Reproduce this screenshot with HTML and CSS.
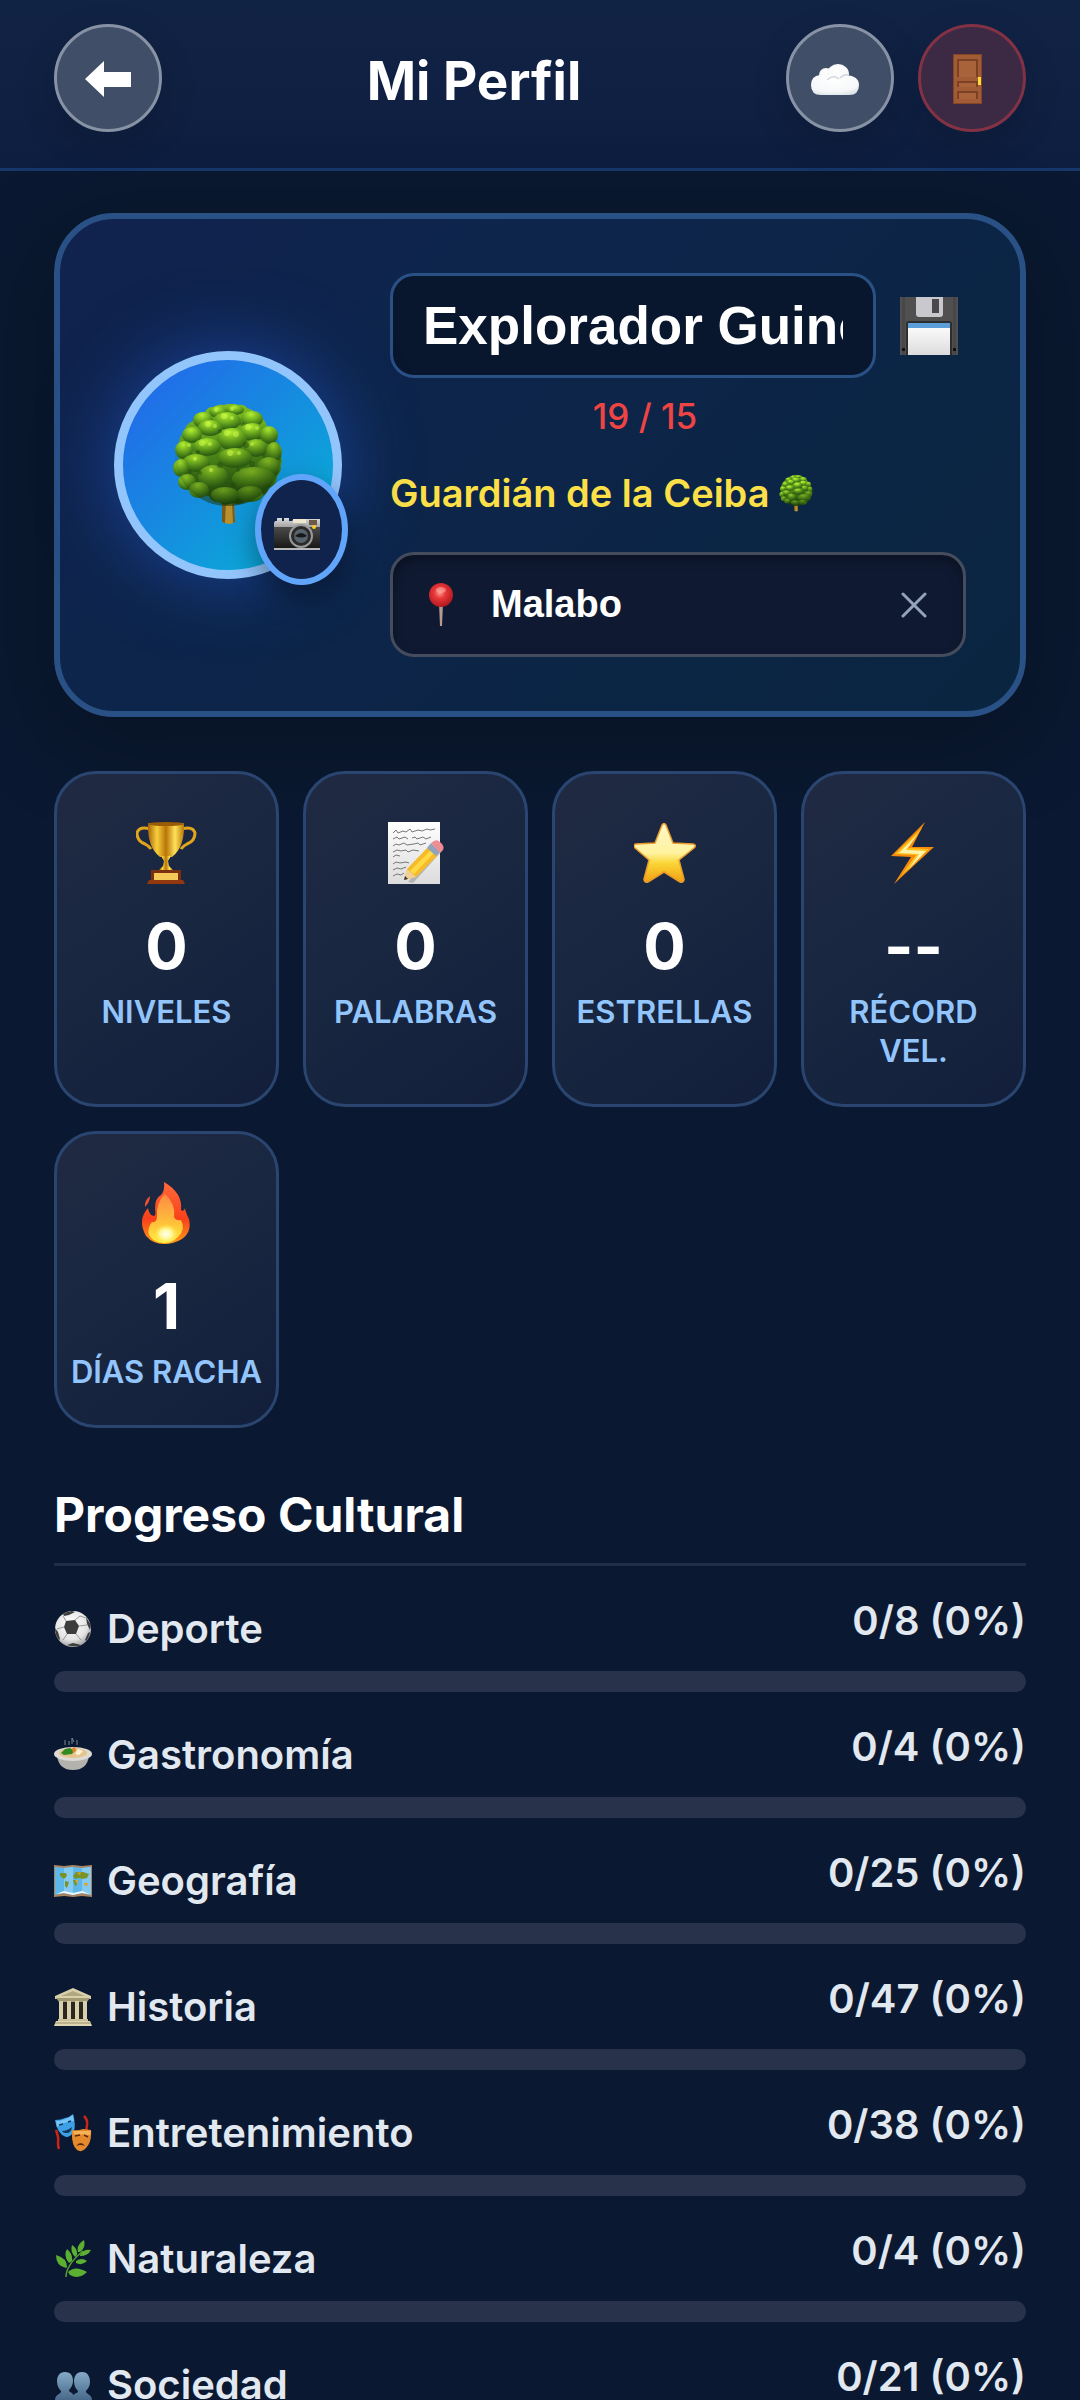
FILE: index.html
```html
<!DOCTYPE html>
<html lang="es">
<head>
    <meta charset="UTF-8">
    <meta name="viewport" content="width=device-width, initial-scale=1.0">
    <title>Mi Perfil</title>
    <link rel="stylesheet" href="styles.css">
</head>
<body>
    <!-- Dibujos compartidos -->
    <svg class="defs" width="0" height="0" aria-hidden="true">
        <defs>
            <radialGradient id="leaf" cx="45%" cy="20%" r="75%">
                <stop offset="0" stop-color="#b4f02f"/>
                <stop offset="0.5" stop-color="#6fae20"/>
                <stop offset="1" stop-color="#2f6312"/>
            </radialGradient>
            <linearGradient id="crown" x1="0" y1="0" x2="0" y2="1">
                <stop offset="0" stop-color="#7dbb22"/>
                <stop offset="0.6" stop-color="#4c8a1a"/>
                <stop offset="1" stop-color="#1f430c"/>
            </linearGradient>
            <linearGradient id="shade" x1="0.3" y1="0" x2="0.6" y2="1">
                <stop offset="0.3" stop-color="#1f430c" stop-opacity="0"/>
                <stop offset="1" stop-color="#1a3a0a" stop-opacity="0.65"/>
            </linearGradient>
            <linearGradient id="gold" x1="0" x2="1" y1="0" y2="0">
                <stop offset="0" stop-color="#a86405"/>
                <stop offset="0.25" stop-color="#f8cf3c"/>
                <stop offset="0.5" stop-color="#b87406"/>
                <stop offset="0.75" stop-color="#ffe15a"/>
                <stop offset="1" stop-color="#b97808"/>
            </linearGradient>
            <linearGradient id="starFill" x1="0" x2="0" y1="0" y2="1">
                <stop offset="0" stop-color="#fff6c8"/>
                <stop offset="0.5" stop-color="#fff3a0"/>
                <stop offset="0.68" stop-color="#fbd535"/>
                <stop offset="1" stop-color="#f0a012"/>
            </linearGradient>
            <linearGradient id="flame" x1="0" x2="0" y1="0" y2="1">
                <stop offset="0" stop-color="#ff6a3c"/>
                <stop offset="0.6" stop-color="#f8401a"/>
                <stop offset="1" stop-color="#ff9b1c"/>
            </linearGradient>
            <linearGradient id="flameIn" x1="0" x2="0" y1="0" y2="1">
                <stop offset="0" stop-color="#ff8a45"/>
                <stop offset="0.6" stop-color="#ffc13a"/>
                <stop offset="1" stop-color="#ffee3a"/>
            </linearGradient>
            <radialGradient id="glow">
                <stop offset="0" stop-color="#fffff0"/>
                <stop offset="0.5" stop-color="#fff79a"/>
                <stop offset="1" stop-color="#ffe84a" stop-opacity="0"/>
            </radialGradient>
            <radialGradient id="puff" cx="45%" cy="30%" r="75%">
                <stop offset="0" stop-color="#ffffff"/>
                <stop offset="0.75" stop-color="#f6f7f9"/>
                <stop offset="1" stop-color="#dde2e8"/>
            </radialGradient>
            <radialGradient id="pinHead" cx="45%" cy="40%" r="60%">
                <stop offset="0" stop-color="#ff9a90"/>
                <stop offset="0.4" stop-color="#e8383a"/>
                <stop offset="1" stop-color="#b0181f"/>
            </radialGradient>
            <linearGradient id="paper" x1="0" x2="0" y1="0" y2="1">
                <stop offset="0" stop-color="#ffffff"/>
                <stop offset="1" stop-color="#dcdcdc"/>
            </linearGradient>
            <linearGradient id="steel" x1="0" x2="0" y1="0" y2="1">
                <stop offset="0" stop-color="#dcdcdc"/>
                <stop offset="0.28" stop-color="#a5a5a5"/>
                <stop offset="0.3" stop-color="#4a4a4a"/>
                <stop offset="1" stop-color="#161616"/>
            </linearGradient>
            <linearGradient id="bust" x1="0" x2="0" y1="0" y2="1">
                <stop offset="0" stop-color="#86a9c8"/>
                <stop offset="1" stop-color="#3f6080"/>
            </linearGradient>
            <radialGradient id="ball" cx="45%" cy="35%" r="65%">
                <stop offset="0" stop-color="#ffffff"/>
                <stop offset="0.7" stop-color="#e4e4e4"/>
                <stop offset="1" stop-color="#a4a4a4"/>
            </radialGradient>
        </defs>
        <symbol id="tree" viewBox="0 0 112 122">
            <path d="M50 98h12l1 20q-6 4-12 0z" fill="#b8922f"/>
            <path d="M50 98h4l-1 21-3-1zM60 98h2l1 20-2 1z" fill="#7c5a1a"/>
            <path d="M40 4q6-5 12-3 8-3 14 0 6-1 9 3 8 2 11 8 8 3 9 11 7 5 6 13 7 5 5 13 6 5 3 12 0 8-4 11 0 9-8 12-2 8-10 9-5 7-13 4-6 5-13 2-8 4-14-1-8 0-10-6-8 0-10-7-9-1-10-9-7-3-6-11-6-4-4-11-5-6 0-12-1-9 5-13 1-9 9-12 3-8 12-9 3-5 7-5z" fill="url(#crown)"/>
            <g fill="url(#leaf)">
                <ellipse cx="46" cy="8" rx="9" ry="6"/><ellipse cx="63" cy="6" rx="9" ry="5"/>
                <ellipse cx="31" cy="16" rx="10" ry="8"/><ellipse cx="80" cy="15" rx="11" ry="8"/>
                <ellipse cx="55" cy="17" rx="14" ry="9"/><ellipse cx="38" cy="24" rx="12" ry="8"/>
                <ellipse cx="20" cy="31" rx="10" ry="8"/><ellipse cx="80" cy="28" rx="13" ry="9"/>
                <ellipse cx="97" cy="31" rx="9" ry="9"/><ellipse cx="12" cy="46" rx="9" ry="9"/>
                <ellipse cx="60" cy="35" rx="15" ry="11"/><ellipse cx="35" cy="43" rx="14" ry="9"/>
                <ellipse cx="84" cy="44" rx="12" ry="9"/><ellipse cx="102" cy="48" rx="8" ry="10"/>
                <ellipse cx="24" cy="59" rx="14" ry="9"/><ellipse cx="63" cy="54" rx="17" ry="10"/>
                <ellipse cx="97" cy="63" rx="12" ry="10"/><ellipse cx="9" cy="64" rx="8" ry="9"/>
                <ellipse cx="15" cy="78" rx="9" ry="8"/><ellipse cx="41" cy="73" rx="15" ry="12"/>
                <ellipse cx="82" cy="75" rx="22" ry="12"/><ellipse cx="27" cy="86" rx="10" ry="8"/>
                <ellipse cx="53" cy="91" rx="14" ry="8"/><ellipse cx="78" cy="90" rx="13" ry="8"/>
            </g>
            <ellipse cx="56" cy="52" rx="53" ry="50" fill="url(#shade)"/>
            <g fill="#d4ff50" opacity="0.5">
                <circle cx="44" cy="6" r="2"/><circle cx="60" cy="5" r="2"/><circle cx="52" cy="12" r="3"/><circle cx="60" cy="14" r="2"/>
                <circle cx="36" cy="20" r="3"/><circle cx="43" cy="22" r="2"/><circle cx="76" cy="23" r="3"/><circle cx="85" cy="24" r="2"/>
                <circle cx="55" cy="29" r="3"/><circle cx="64" cy="30" r="3"/><circle cx="30" cy="39" r="3"/><circle cx="38" cy="40" r="2"/>
                <circle cx="58" cy="49" r="3"/><circle cx="67" cy="49" r="2"/><circle cx="17" cy="41" r="2"/><circle cx="23" cy="55" r="2"/>
                <circle cx="80" cy="40" r="2"/><circle cx="39" cy="66" r="2"/>
            </g>
            <g fill="#244d0e" opacity="0.5">
                <circle cx="48" cy="27" r="2"/><circle cx="70" cy="20" r="2"/><circle cx="26" cy="48" r="2"/><circle cx="74" cy="41" r="3"/>
                <circle cx="48" cy="61" r="3"/><circle cx="28" cy="69" r="2"/><circle cx="80" cy="60" r="3"/><circle cx="61" cy="81" r="3"/>
                <circle cx="92" cy="52" r="2"/><circle cx="18" cy="68" r="2"/><circle cx="66" cy="66" r="2"/><circle cx="96" cy="82" r="2"/>
            </g>
        </symbol>
    </svg>

    <header class="top-bar">
        <button class="round-button" type="button" aria-label="Volver">
            <svg width="48" height="48" viewBox="0 0 48 48"><path d="M1 25 20 7v11h27v15H20v10z" fill="#fff"/></svg>
        </button>
        <h1 class="page-title">Mi Perfil</h1>
        <div class="top-actions">
            <button class="round-button" type="button" aria-label="Nube">
                <svg width="58" height="50" viewBox="0 0 58 50">
                    <g fill="url(#puff)">
                        <circle cx="15" cy="22" r="7"/><ellipse cx="27" cy="21" rx="11" ry="10"/>
                        <path d="M0 32q0-9 9-10 8-2 12 2 6-5 14-2 13 1 13 10 0 10-10 10H10Q0 42 0 32z"/>
                    </g>
                    <path d="M16 27q6-6 12-1m1-1q4-4 9-3" fill="none" stroke="#d3d8df" stroke-width="1.5"/>
                </svg>
            </button>
            <button class="round-button round-button-danger" type="button" aria-label="Salir">
                <svg width="40" height="56" viewBox="0 0 40 56">
                    <path d="M1 4h29v50H1z" fill="#844524"/>
                    <path d="M2 5h27v48H2z" fill="#a25c35"/>
                    <path d="M5 9h21v18H5zM5 31h21v6H5zM5 41h21v8H5z" fill="#7c4122"/>
                    <path d="M7 11h17v16H7zM7 33h17v4H7zM7 43h17v6H7z" fill="#a9633b"/>
                    <path d="M26 27h3v8h-3z" fill="#ffdc3a"/>
                </svg>
            </button>
        </div>
    </header>

    <main class="content">
        <section class="profile-card">
            <div class="avatar">
                <svg width="112" height="122"><use href="#tree"/></svg>
                <button class="avatar-edit" type="button" aria-label="Cambiar foto">
                    <svg width="58" height="46" viewBox="0 0 58 46">
                        <path d="M2 14h2v-3h5v3h2v-3h5v3h3l2-2h26v30H1V16z" fill="url(#steel)"/>
                        <path d="M20 12h13v4H20z" fill="#efe6cf"/><path d="M36 13h8v5h-8z" fill="#6b594a"/>
                        <path d="M1 41h46v2H1z" fill="#b9b9b9"/>
                        <circle cx="28" cy="29" r="12" fill="#9a9a9a"/><circle cx="28" cy="29" r="10" fill="#2a2a2a"/>
                        <circle cx="28" cy="29" r="7" fill="#59636b"/><path d="M22 29q6-6 12 0-6 3-12 0z" fill="#15191c"/>
                        <circle cx="41" cy="20" r="2" fill="#ffc928"/>
                    </svg>
                </button>
            </div>
            <div class="profile-info">
                <div class="name-row">
                    <div class="name-field">
                        <div class="name-box">
                            <input class="name-input" type="text" value="Explorador Guineano" aria-label="Nombre">
                        </div>
                        <p class="name-count">19 / 15</p>
                    </div>
                    <button class="save-button" type="button" aria-label="Guardar">
                        <svg width="58" height="58" viewBox="0 0 58 58">
                            <path d="M0 0h58v58H0z" fill="#505050"/>
                            <path d="M2 0h3v58H2zM53 0h3v58h-3z" fill="#474747"/>
                            <path d="M16 0h27v17q0 3-3 3H19q-3 0-3-3z" fill="#c9c9cd"/>
                            <path d="M32 2h7v14h-7z" fill="#49494d"/>
                            <path d="M6 27q0-3 3-3h40q3 0 3 3v31H6z" fill="#2e2e2e"/>
                            <path d="M8 26h42v32H8z" fill="url(#paper)"/>
                            <path d="M8 26h42v5H8z" fill="#5c9fd8"/>
                            <path d="M2 51h3v3H2zM53 51h3v3h-3z" fill="#111"/>
                        </svg>
                    </button>
                </div>
                <p class="rank">Guardián de la Ceiba <svg width="34" height="37"><use href="#tree"/></svg></p>
                <div class="location">
                    <svg width="24" height="44" viewBox="0 0 24 44">
                        <path d="M10 20h4l-1 23h-2z" fill="#b59a90"/>
                        <circle cx="12" cy="12" r="12" fill="url(#pinHead)"/>
                        <ellipse cx="12" cy="7" rx="5" ry="3" fill="#ffb4ac" opacity="0.5"/>
                    </svg>
                    <input class="location-input" type="text" value="Malabo" aria-label="Ubicación">
                    <button class="clear-button" type="button" aria-label="Borrar">
                        <svg width="26" height="26" viewBox="0 0 26 26"><path d="m2 2 22 22M24 2 2 24" stroke="#94a3b8" stroke-width="3" stroke-linecap="round"/></svg>
                    </button>
                </div>
            </div>
        </section>

        <section class="stats">
            <div class="stat">
                <svg width="62" height="62" viewBox="0 0 62 62">
                    <path d="M14 7Q3 4 1 11q0 8 8 11 4 2 6 5M46 7q11-3 13 4 0 8-8 11-4 2-6 5" fill="none" stroke="#e0a51c" stroke-width="3"/>
                    <path d="M12 1h36q1 24-12 34H24Q11 25 12 1z" fill="url(#gold)"/>
                    <ellipse cx="30" cy="2" rx="18" ry="2" fill="#9a5c05"/>
                    <path d="M25 34h10l-3 5 1 5 4 4H23l4-4 1-5z" fill="url(#gold)"/>
                    <path d="M15 48h30v10H15z" fill="#7a2f10"/><path d="M18 51h24v8H18z" fill="#f4c957"/>
                    <path d="M13 58h34l2 4H11z" fill="#91380f"/>
                </svg>
                <strong class="stat-value">0</strong>
                <span class="stat-label">NIVELES</span>
            </div>
            <div class="stat">
                <svg width="62" height="62" viewBox="0 0 62 62">
                    <path d="M3 0h52v62H3z" fill="url(#paper)"/>
                    <g fill="none" stroke="#777" stroke-width="1">
                        <path d="m8 11 3-3 2 3 5-2 3 1 4-3 2 3 6-2 4 1 5-2 3 1 5-1"/>
                        <path d="m8 17 4-2 2 2 6-2 3 2m4-1 3-1 2 2 6-2 3 2 5-2"/>
                        <path d="m8 24 3-2 3 1 5-2 3 2 7-1 4-1 2 2 6-2"/>
                        <path d="m8 30 4-2 4 1 5-1 2 2 5-2 6 1"/><path d="m8 35 3-2 4 1"/>
                        <path d="m8 42 3-2 4 1 6-1 3 1"/><path d="m8 48 4-2 4 1 5-2"/><path d="m8 54 4-2 4 1 3-2"/>
                    </g>
                    <path d="m23 60 5 1 29-32-4-3z" fill="#888" opacity="0.5"/>
                    <path d="m19 58 3-11 22-23 9 9-22 22z" fill="#f6bb29"/>
                    <path d="m25 49 22-22 3 3-21 22z" fill="#ffda45"/>
                    <path d="m19 58 3-11 9 8z" fill="#f0cf98"/><path d="m19 58 1-4 3 3z" fill="#333"/>
                    <path d="m42 26 4-5 9 9-4 4z" fill="#8fa5bd"/>
                    <path d="m46 21 3-2q3-2 6 1 5 4 3 8l-3 3z" fill="#ee8d94"/>
                </svg>
                <strong class="stat-value">0</strong>
                <span class="stat-label">PALABRAS</span>
            </div>
            <div class="stat">
                <svg width="62" height="62" viewBox="0 0 62 62">
                    <path d="M28 3q2-3 4 0l7 18 20 1q4 1 1 4L45 38l5 19q0 4-4 3L30 50 14 60q-4 1-4-3l5-19L1 26q-3-3 1-4l19-1z" fill="url(#starFill)" stroke="#e99b2c" stroke-width="1.5"/>
                </svg>
                <strong class="stat-value">0</strong>
                <span class="stat-label">ESTRELLAS</span>
            </div>
            <div class="stat">
                <svg width="62" height="62" viewBox="0 0 62 62">
                    <path d="M42 0 8 34l20 1-17 27 40-37-22 0z" fill="#f78a0c"/>
                    <path d="M39 6 12 32l21 1-15 21 28-27-21-1z" fill="#ffc21c"/>
                    <path d="M35 12 16 31l20 1-11 16 18-19-20-1z" fill="#fff4ae"/>
                </svg>
                <strong class="stat-value">--</strong>
                <span class="stat-label">RÉCORD VEL.</span>
            </div>
            <div class="stat">
                <svg width="62" height="62" viewBox="0 0 62 62">
                    <path d="M28 0q19 11 17 28 3 2 4-2 0 3 4 11 3 13-7 20-8 5-18 5-11 0-18-8Q1 38 12 26q1 7 6 8 2 0 1-8 0-10 6-13 4-4 3-13z" fill="url(#flame)"/>
                    <path d="M14 14q0 6-5 11-1-6 5-11z" fill="#ef5034"/>
                    <path d="M29 12q11 10 9 23 2 4 7 3 5 10-3 17-6 6-14 6-10 0-15-8-2-7 3-13 5 1 5-6-1-13 8-22z" fill="url(#flameIn)"/>
                    <ellipse cx="30" cy="52" rx="12" ry="10" fill="url(#glow)"/>
                </svg>
                <strong class="stat-value">1</strong>
                <span class="stat-label">DÍAS RACHA</span>
            </div>
        </section>

        <section class="progress-section">
            <h2 class="section-title">Progreso Cultural</h2>

            <div class="category">
                <div class="category-head">
                    <span class="category-name">
                        <svg width="38" height="38" viewBox="0 0 38 38">
                            <circle cx="19" cy="19" r="18" fill="url(#ball)"/>
                            <path d="m12 11 9-1 4 6-3 8h-9l-3-7zM9 4q5-3 9-3l3 1-6 3-5 1zM32 7l5 8-1 5-3-6zM1 18l3 4 2 7-1 1q-4-5-4-12zM36 22q-1 6-4 9l-1-1 3-7zM13 35l6-2 8 2-2 1q-6 1-12-1z" fill="#3d3d3d"/>
                            <path d="m12 11-3-5m12 4 5-4 6 2m-7 8 8-1m-11 9 5 6m-14-6-4 6m1-13-7 2" stroke="#999" fill="none"/>
                        </svg>
                        Deporte
                    </span>
                    <span class="category-count">0/8 (0%)</span>
                </div>
                <div class="bar" role="progressbar" aria-valuenow="0" aria-label="Deporte"></div>
            </div>
            <div class="category">
                <div class="category-head">
                    <span class="category-name">
                        <svg width="38" height="38" viewBox="0 0 38 38">
                            <path d="M11 9V4M18 8V2l2 4m3 3V4M15 9V5" stroke="#7d8694" stroke-width="1" fill="none"/>
                            <path d="M3 20h32q-2 14-16 14T3 20z" fill="#b3b2ae"/>
                            <ellipse cx="19" cy="18" rx="19" ry="7" fill="#dedbd4"/><ellipse cx="19" cy="17" rx="14" ry="5" fill="#e5c48d"/>
                            <path d="m7 17 4-4 5-1 4 3-2 3-8 1z" fill="#318a24"/><path d="m18 12 3-1 1 4-3 2z" fill="#e9802a"/>
                            <path d="m24 13 5 2-4 4-4-1z" fill="#fff3d8"/>
                        </svg>
                        Gastronomía
                    </span>
                    <span class="category-count">0/4 (0%)</span>
                </div>
                <div class="bar" role="progressbar" aria-valuenow="0" aria-label="Gastronomía"></div>
            </div>
            <div class="category">
                <div class="category-head">
                    <span class="category-name">
                        <svg width="38" height="38" viewBox="0 0 38 38">
                            <path d="m0 3 10 1 9-1 9 1 10-1v32l-10-1-9 1-9-1-10 1z" fill="#a98463"/>
                            <path d="m1 5 9 1 9-1 9 1 9-1v28l-9-2-9 2-9-2-9 2z" fill="#5db7ea"/>
                            <path d="m10 6 9-1v28l-9-2zM28 6l9-1v28l-9-2z" fill="#84caf1"/>
                            <path d="m6 11 6 0 1 3-3 3-4-3zM11 19l4 1-2 6-2-2zM19 14l3-4 7 0 6 2-2 4-4 1-4-1-4 1zM19 18l4 0 0 5-2 1z" fill="#7a9328"/>
                            <path d="m21 18 3 0-1 4zM30 21l4 0-1 3h-2zM23 11l4-1-1 3z" fill="#e0a32c"/>
                            <path d="m2 32 8-3 9 2 9-2 8 3-8-1-9 2-9-2z" fill="#eef7fb"/>
                        </svg>
                        Geografía
                    </span>
                    <span class="category-count">0/25 (0%)</span>
                </div>
                <div class="bar" role="progressbar" aria-valuenow="0" aria-label="Geografía"></div>
            </div>
            <div class="category">
                <div class="category-head">
                    <span class="category-name">
                        <svg width="38" height="38" viewBox="0 0 38 38">
                            <path d="M5 13h28v19H5z" fill="#2b2720"/>
                            <path d="M19 0 37 8v3H1V8z" fill="#d8d0ab"/><path d="m19 3 12 5H7z" fill="#b0a77f"/><path d="M2 10h34l-3 4H5z" fill="#a39a73"/>
                            <path d="M5 13h4v19H5zM13 13h4v19h-4zM21 13h4v19h-4zM29 13h4v19h-4z" fill="#d8d0ab"/>
                            <path d="M4 31h30v3H4z" fill="#c9c098"/><path d="M2 33h34l2 5H0z" fill="#ded6b3"/><path d="M1 35h36" stroke="#998f67"/>
                        </svg>
                        Historia
                    </span>
                    <span class="category-count">0/47 (0%)</span>
                </div>
                <div class="bar" role="progressbar" aria-valuenow="0" aria-label="Historia"></div>
            </div>
            <div class="category">
                <div class="category-head">
                    <span class="category-name">
                        <svg width="38" height="38" viewBox="0 0 38 38">
                            <path d="M2 16q3 8 2 12 0 5 1 7M30 2q4 4 3 9-1 4 0 8" stroke="#cf2414" stroke-width="2.5" fill="none"/>
                            <path d="M1 6q6 0 10-2 5-1 8-4 3 11 1 17-3 6-8 6Q3 20 1 6z" fill="#3d9fe6"/>
                            <path d="M2 7q8 0 17-6l1 6Q9 8 3 13z" fill="#74c4f7"/>
                            <path d="m5 11 4-1m5-2 3-1" stroke="#10385c" stroke-width="1.5"/>
                            <path d="M8 17q5 0 10-4-1 6-5 6-4 0-5-2z" fill="#10385c"/>
                            <path d="M18 16q6 1 11-1l8 1q1 12-5 18-4 5-9 2-6-5-5-20z" fill="#e58a2c"/>
                            <path d="m19 17 10 0 8 0-1 4-16-1z" fill="#f6b257"/>
                            <path d="m21 22 5-1m4 0 4 2" stroke="#5c2a08" stroke-width="1.5"/>
                            <path d="M22 32q5-6 9 0-5-2-9 0z" fill="#5c2a08"/>
                        </svg>
                        Entretenimiento
                    </span>
                    <span class="category-count">0/38 (0%)</span>
                </div>
                <div class="bar" role="progressbar" aria-valuenow="0" aria-label="Entretenimiento"></div>
            </div>
            <div class="category">
                <div class="category-head">
                    <span class="category-name">
                        <svg width="38" height="38" viewBox="0 0 38 38">
                            <path d="M12 37q0-12 17-26" stroke="#5d9c35" stroke-width="1.5" fill="none"/>
                            <g fill="#5cb031">
                                <path d="M12 28Q2 26 2 15q11 3 11 12zM15 23q-6-7-2-14 6 5 5 12zM21 17q-5-5-3-12 6 4 5 10zM24 12q-2-7 6-12 2 8-4 12zM26 15q3-6 11-5-3 6-11 6zM22 21q6-4 11 0-5 5-11 2zM14 32q7-7 19 0-8 8-17 3z"/>
                            </g>
                        </svg>
                        Naturaleza
                    </span>
                    <span class="category-count">0/4 (0%)</span>
                </div>
                <div class="bar" role="progressbar" aria-valuenow="0" aria-label="Naturaleza"></div>
            </div>
            <div class="category">
                <div class="category-head">
                    <span class="category-name">
                        <svg width="38" height="38" viewBox="0 0 38 38">
                            <g fill="url(#bust)">
                                <path d="M11 6c-6 0-8 5-8 9 0 5 2 8 4 10 1 3-6 3-6 9v4h18v-9c0-3-4-2-4-5 2-2 4-5 4-9 0-5-2-9-8-9z"/>
                                <path d="M28 6c-6 0-8 5-8 9 0 5 2 8 4 10 0 3-5 2-5 5v8h19v-4c0-6-7-6-6-9 2-2 4-5 4-9 0-5-2-10-8-10z"/>
                            </g>
                        </svg>
                        Sociedad
                    </span>
                    <span class="category-count">0/21 (0%)</span>
                </div>
                <div class="bar" role="progressbar" aria-valuenow="0" aria-label="Sociedad"></div>
            </div>
        </section>
    </main>
</body>
</html>
```

FILE: styles.css
```css
* {
    box-sizing: border-box;
}
body {
    margin: 0;
    font-family: Inter, "Liberation Sans", sans-serif;
    color: #fff;
    background-color: #0a1931;
}
h1, h2, p {
    margin: 0;
}
button {
    padding: 0;
    border: none;
    background: none;
    cursor: pointer;
}
svg {
    display: block;
    flex-shrink: 0;
}
.defs {
    position: absolute;
}

/* Cabecera */
.top-bar {
    display: flex;
    justify-content: space-between;
    align-items: center;
    padding: 24px 54px 36px;
    background: linear-gradient(#112345, #0e1e40);
    border-bottom: 3px solid #17376b;
}
.page-title {
    padding-top: 6px;
    font-size: 53px;
    line-height: 66px;
    font-weight: 700;
}
.top-actions {
    display: flex;
    gap: 24px;
}
.round-button {
    display: flex;
    align-items: center;
    justify-content: center;
    width: 108px;
    height: 108px;
    border: 3px solid #8892a5;
    border-radius: 50%;
    background-color: #404e68;
    box-shadow: 0 12px 36px rgba(0, 0, 0, 0.15);
}
.round-button-danger {
    border-color: #833245;
    background-color: #3c2943;
}

.content {
    padding: 42px 54px;
}

/* Tarjeta de perfil */
.profile-card {
    display: flex;
    align-items: center;
    gap: 48px;
    padding: 54px;
    border: 6px solid #2a5185;
    border-radius: 60px;
    background: linear-gradient(135deg, #11224f, #0d254b 35%, #0a2540);
    box-shadow: 0 24px 96px rgba(0, 0, 0, 0.3);
}
.avatar {
    position: relative;
    display: flex;
    align-items: center;
    justify-content: center;
    flex-shrink: 0;
    width: 228px;
    height: 228px;
    border: 9px solid #93c5fd;
    border-radius: 50%;
    background: linear-gradient(135deg, #2563eb, #06b6d4);
    box-shadow: 0 0 75px rgba(37, 99, 235, 0.5);
}
.avatar-edit {
    position: absolute;
    right: -15px;
    bottom: -15px;
    display: flex;
    align-items: center;
    justify-content: center;
    width: 93px;
    height: 111px;
    border: 6px solid #60a5fa;
    border-radius: 50%;
    background-color: #10234d;
    box-shadow: 0 12px 30px rgba(0, 0, 0, 0.4);
}
.profile-info {
    flex: 1;
    min-width: 0;
}
.name-row {
    display: flex;
}
.name-field {
    flex: 1;
    min-width: 0;
}
.name-box {
    padding-right: 24px;
}
.name-input {
    display: block;
    width: 100%;
    height: 105px;
    padding: 0 30px;
    border: 3px solid #2a5185;
    border-radius: 24px;
    background-color: #08162e;
    color: #fff;
    font: bold 53px "Liberation Sans", sans-serif;
}
.name-count {
    margin-top: 12px;
    color: #ef4444;
    font-size: 35px;
    line-height: 52px;
    font-weight: 500;
    text-align: center;
}
.save-button {
    display: flex;
    align-items: center;
    width: 66px;
    height: 105px;
}
.rank {
    display: flex;
    align-items: center;
    gap: 9px;
    margin-top: 21px;
    color: #fde047;
    font-size: 38px;
    line-height: 60px;
    font-weight: 600;
}
.location {
    display: flex;
    align-items: center;
    gap: 38px;
    height: 105px;
    margin-top: 29px;
    padding: 0 36px;
    border: 3px solid #454c5d;
    border-radius: 24px;
    background-color: #0f1a32;
    box-shadow: inset 0 6px 12px rgba(0, 0, 0, 0.3);
}
.location-input {
    flex: 1;
    min-width: 0;
    padding: 0;
    border: none;
    background: none;
    color: #fff;
    font: bold 38px "Liberation Sans", sans-serif;
}

/* Estadísticas */
.stats {
    display: grid;
    grid-template-columns: repeat(4, 1fr);
    gap: 24px;
    margin-top: 54px;
}
.stat {
    display: flex;
    flex-direction: column;
    align-items: center;
    padding: 48px 9px 34px;
    border: 3px solid #294570;
    border-radius: 42px;
    background: linear-gradient(145deg, #202942, #192741 45%, #131f3a);
    text-align: center;
}
.stat-value {
    margin-top: 29px;
    font-size: 63px;
    line-height: 66px;
    font-weight: 700;
}
.stat-label {
    margin-top: 13px;
    color: #93c5fd;
    font-size: 31px;
    line-height: 39px;
    font-weight: 600;
}

/* Progreso */
.progress-section {
    margin-top: 54px;
}
.section-title {
    margin-bottom: 30px;
    padding-bottom: 15px;
    border-bottom: 3px solid #222e47;
    font-size: 48px;
    line-height: 66px;
    font-weight: 700;
}
.category {
    margin-bottom: 30px;
}
.category-head {
    display: flex;
    justify-content: space-between;
    align-items: flex-start;
    margin-bottom: 9px;
    color: #e2e8f0;
    font-size: 40px;
    font-weight: 600;
}
.category-name {
    display: flex;
    align-items: center;
    gap: 15px;
    line-height: 66px;
}
.category-count {
    line-height: 50px;
}
.bar {
    height: 21px;
    border-radius: 12px;
    background-color: #28334b;
}
```
